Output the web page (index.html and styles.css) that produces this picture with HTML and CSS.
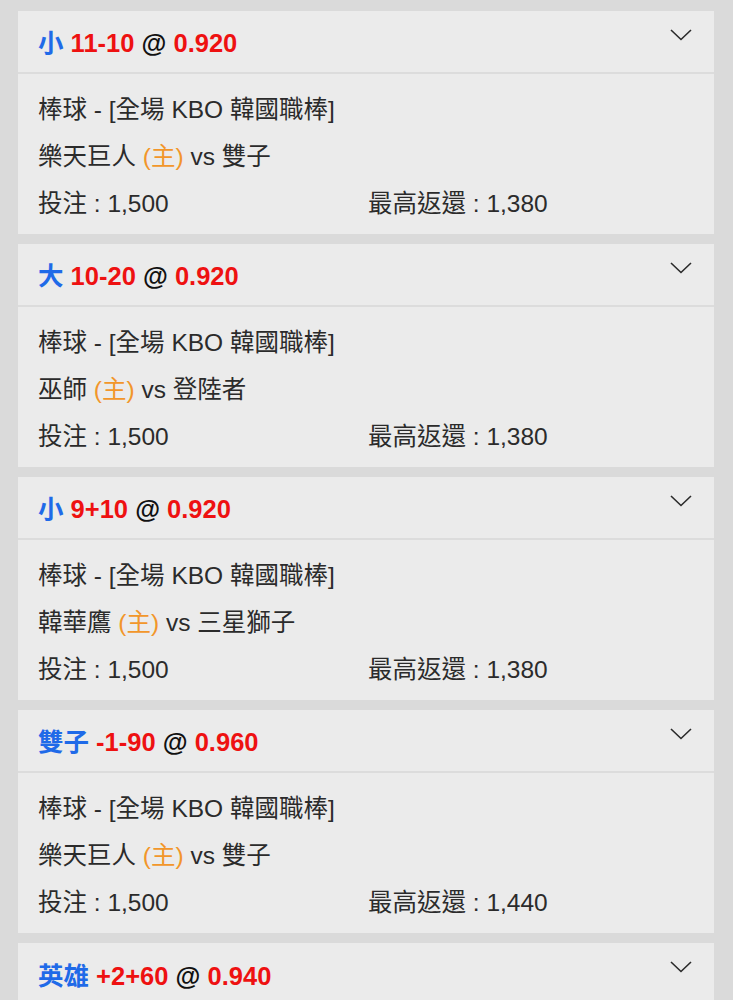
FILE: index.html
```html
<!DOCTYPE html>
<html lang="zh-Hant">
<head>
<meta charset="utf-8">
<link rel="stylesheet" href="styles.css">
</head>
<body>
<div class="list">
  <div class="card">
    <div class="head">
      <div class="title"><span class="sel">小</span> <span class="hl">11-10</span> @ <span class="hl">0.920</span></div>
      <svg class="chev" width="22" height="12" viewBox="0 0 22 12"><path d="M1 1 L11 10.5 L21 1" fill="none" stroke="#2a2a2a" stroke-width="1.6"/></svg>
    </div>
    <div class="body">
      <div class="line">棒球 - [全場 KBO 韓國職棒]</div>
      <div class="line">樂天巨人 <span class="home">(主)</span> vs 雙子</div>
      <div class="line row"><span>投注 : 1,500</span><span>最高返還 : 1,380</span></div>
    </div>
  </div>
  <div class="card">
    <div class="head">
      <div class="title"><span class="sel">大</span> <span class="hl">10-20</span> @ <span class="hl">0.920</span></div>
      <svg class="chev" width="22" height="12" viewBox="0 0 22 12"><path d="M1 1 L11 10.5 L21 1" fill="none" stroke="#2a2a2a" stroke-width="1.6"/></svg>
    </div>
    <div class="body">
      <div class="line">棒球 - [全場 KBO 韓國職棒]</div>
      <div class="line">巫師 <span class="home">(主)</span> vs 登陸者</div>
      <div class="line row"><span>投注 : 1,500</span><span>最高返還 : 1,380</span></div>
    </div>
  </div>
  <div class="card">
    <div class="head">
      <div class="title"><span class="sel">小</span> <span class="hl">9+10</span> @ <span class="hl">0.920</span></div>
      <svg class="chev" width="22" height="12" viewBox="0 0 22 12"><path d="M1 1 L11 10.5 L21 1" fill="none" stroke="#2a2a2a" stroke-width="1.6"/></svg>
    </div>
    <div class="body">
      <div class="line">棒球 - [全場 KBO 韓國職棒]</div>
      <div class="line">韓華鷹 <span class="home">(主)</span> vs 三星獅子</div>
      <div class="line row"><span>投注 : 1,500</span><span>最高返還 : 1,380</span></div>
    </div>
  </div>
  <div class="card">
    <div class="head">
      <div class="title"><span class="sel">雙子</span> <span class="hl">-1-90</span> @ <span class="hl">0.960</span></div>
      <svg class="chev" width="22" height="12" viewBox="0 0 22 12"><path d="M1 1 L11 10.5 L21 1" fill="none" stroke="#2a2a2a" stroke-width="1.6"/></svg>
    </div>
    <div class="body">
      <div class="line">棒球 - [全場 KBO 韓國職棒]</div>
      <div class="line">樂天巨人 <span class="home">(主)</span> vs 雙子</div>
      <div class="line row"><span>投注 : 1,500</span><span>最高返還 : 1,440</span></div>
    </div>
  </div>
  <div class="card">
    <div class="head">
      <div class="title"><span class="sel">英雄</span> <span class="hl">+2+60</span> @ <span class="hl">0.940</span></div>
      <svg class="chev" width="22" height="12" viewBox="0 0 22 12"><path d="M1 1 L11 10.5 L21 1" fill="none" stroke="#2a2a2a" stroke-width="1.6"/></svg>
    </div>
  </div>
</div>
</body>
</html>
```

FILE: styles.css
```css
html, body {
  margin: 0;
  padding: 0;
  background: #dadada;
  height: 1000px;
  overflow: hidden;
}
body {
  font-family: "Liberation Sans", "Noto Sans CJK TC", sans-serif;
  color: #2b2b2b;
}
.list {
  display: flex;
  flex-direction: column;
  gap: 10px;
  padding: 11px 19px 0 18px;
}
.card {
  background: #ebebeb;
  display: flex;
  flex-direction: column;
}
.head {
  display: flex;
  align-items: center;
  justify-content: space-between;
  padding: 0 22px 0 20px;
  border-bottom: 2px solid #dcdcdc;
  box-sizing: border-box;
  height: 63px;
}
.card:last-child .head {
  border-bottom: 0;
  height: 60px;
  align-items: flex-start;
  padding-top: 12px;
}
.title {
  font-size: 25.5px;
  font-weight: bold;
  color: #111;
  padding-bottom: 2px;
}
.sel { color: #1f6ae8; }
.hl { color: #ee1111; }
.chev {
  align-self: flex-start;
  margin-top: 18px;
}
.card:last-child .chev { margin-top: 6px; }
.body {
  padding: 12px 20px 7px 20px;
  display: flex;
  flex-direction: column;
}
.line {
  height: 47px;
  line-height: 47px;
  font-size: 24.5px;
  white-space: nowrap;
}
.home { color: #f2962a; }
.row {
  display: grid;
  grid-template-columns: 330px auto;
}
```
